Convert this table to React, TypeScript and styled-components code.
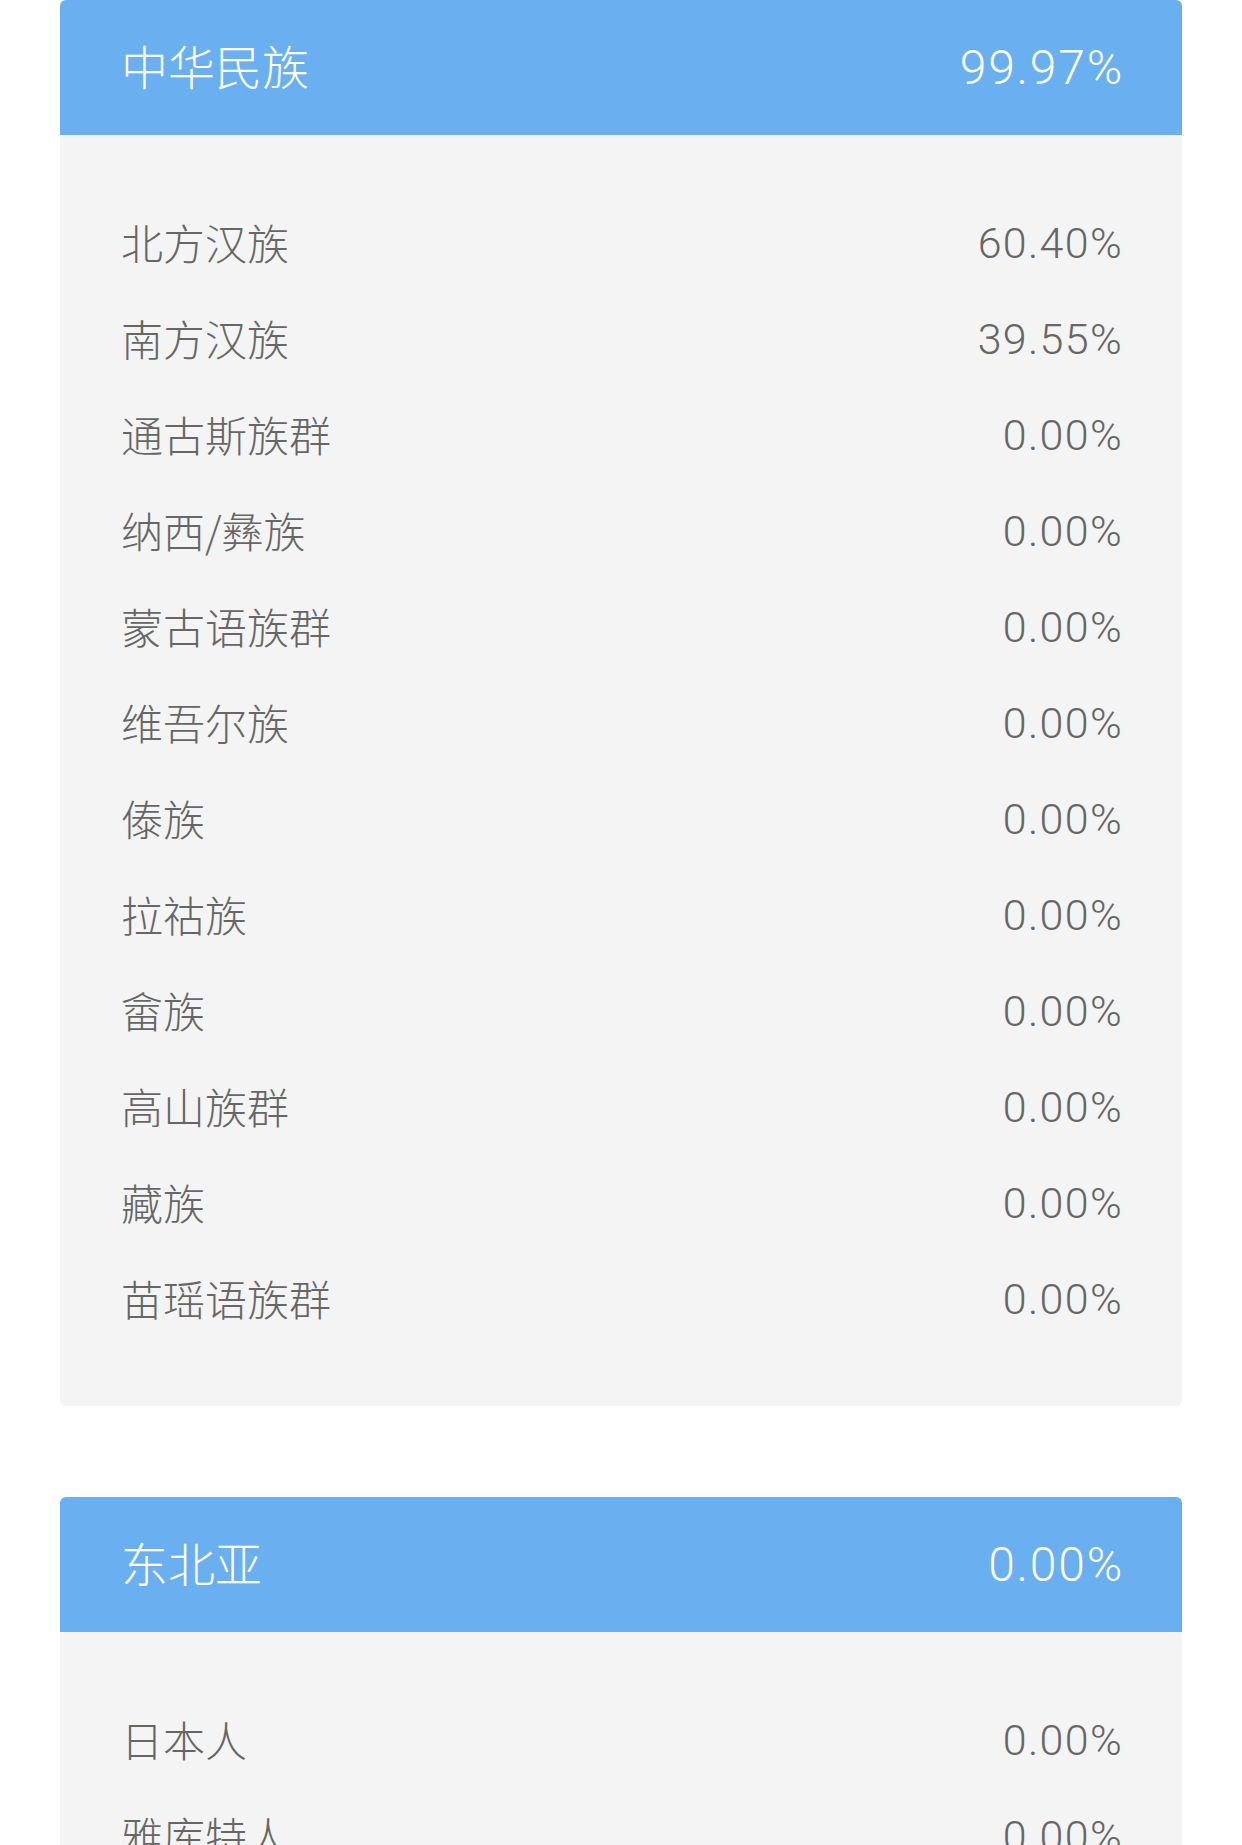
import React from "react";
import styled, { createGlobalStyle } from "styled-components";

const GlobalStyle = createGlobalStyle`
  html, body {
    margin: 0;
    padding: 0;
    background: #ffffff;
  }
  body {
    font-family: Roboto, "Noto Sans CJK SC", sans-serif;
    -webkit-font-smoothing: antialiased;
  }
`;

const Page = styled.div`
  display: flex;
  flex-direction: column;
  gap: 91px;
  padding: 0 60px 120px;
`;

const Card = styled.section`
  border-radius: 6px;
  overflow: hidden;
  background: #f4f4f4;
`;

const Header = styled.header`
  height: 135px;
  background: #6aaff0;
  display: flex;
  align-items: center;
  justify-content: space-between;
  padding: 0 58px 0 61px;
  color: #ffffff;
`;

const Body = styled.div`
  padding: 60px 59px 59px 61px;
  display: flex;
  flex-direction: column;
`;

const Row = styled.div`
  height: 96px;
  display: flex;
  align-items: center;
  justify-content: space-between;
  color: #666666;
`;

const Label = styled.span<{ $big?: boolean }>`
  font-family: "Noto Sans CJK SC", sans-serif;
  font-weight: 300;
  font-size: ${(p) => (p.$big ? "47px" : "42px")};
  line-height: 1;
  padding-bottom: ${(p) => (p.$big ? "6px" : "3px")};
`;

const Value = styled.span<{ $big?: boolean }>`
  font-family: Roboto, "Liberation Sans", sans-serif;
  font-weight: 300;
  font-size: ${(p) => (p.$big ? "48px" : "43px")};
  letter-spacing: ${(p) => (p.$big ? "1.8px" : "1.3px")};
  line-height: 1;
`;

type Group = {
  name: string;
  value: string;
  items: [string, string][];
};

const groups: Group[] = [
  {
    name: "中华民族",
    value: "99.97%",
    items: [
      ["北方汉族", "60.40%"],
      ["南方汉族", "39.55%"],
      ["通古斯族群", "0.00%"],
      ["纳西/彝族", "0.00%"],
      ["蒙古语族群", "0.00%"],
      ["维吾尔族", "0.00%"],
      ["傣族", "0.00%"],
      ["拉祜族", "0.00%"],
      ["畲族", "0.00%"],
      ["高山族群", "0.00%"],
      ["藏族", "0.00%"],
      ["苗瑶语族群", "0.00%"],
    ],
  },
  {
    name: "东北亚",
    value: "0.00%",
    items: [
      ["日本人", "0.00%"],
      ["雅库特人", "0.00%"],
      ["韩国人", "0.00%"],
    ],
  },
];

export default function App() {
  return (
    <>
      <GlobalStyle />
      <Page>
        {groups.map((g) => (
          <Card key={g.name}>
            <Header>
              <Label $big>{g.name}</Label>
              <Value $big>{g.value}</Value>
            </Header>
            <Body>
              {g.items.map(([n, v]) => (
                <Row key={n}>
                  <Label>{n}</Label>
                  <Value>{v}</Value>
                </Row>
              ))}
            </Body>
          </Card>
        ))}
      </Page>
    </>
  );
}
